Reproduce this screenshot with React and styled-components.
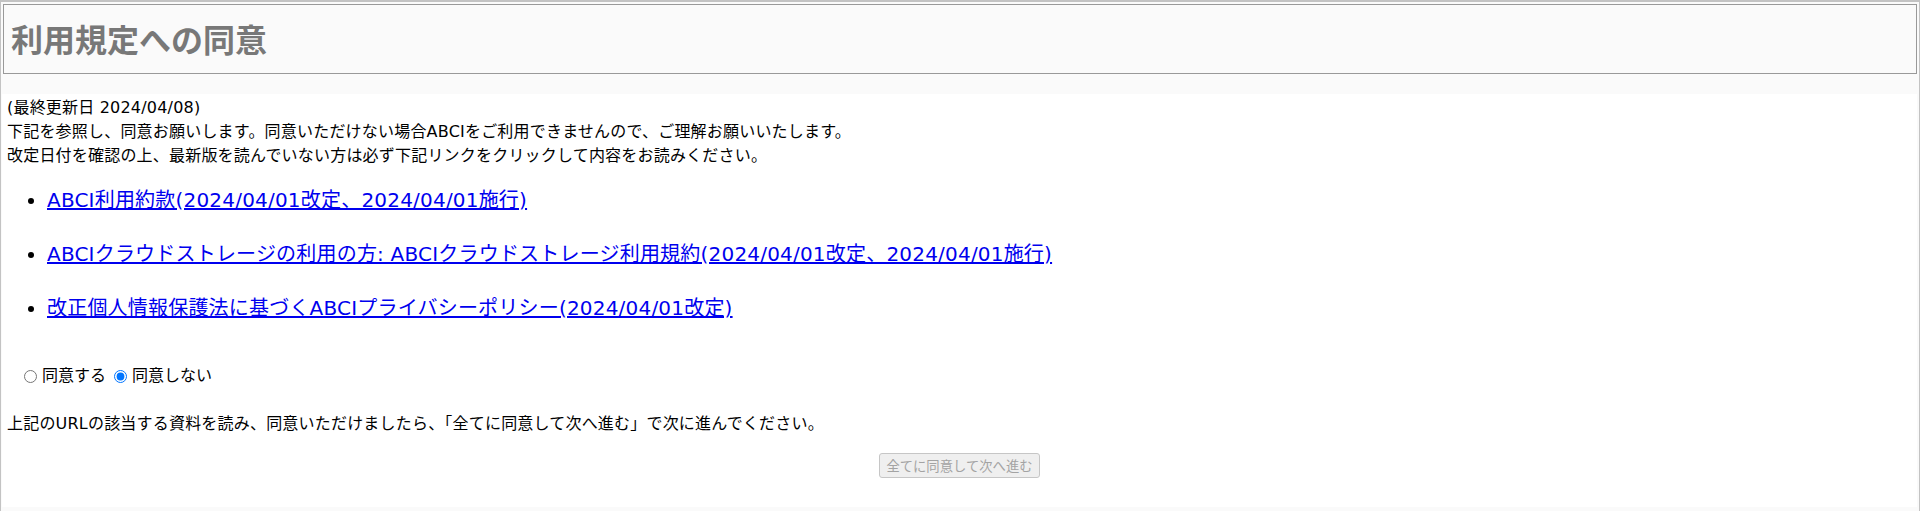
import React, { useState } from 'react'
import styled, { createGlobalStyle } from 'styled-components'

const GlobalStyle = createGlobalStyle`
    html, body {
        margin: 0;
        padding: 0;
        background: #fafafa;
    }
    body {
        font-family: "DejaVu Sans", "Noto Sans CJK JP", sans-serif;
        font-size: 16px;
        color: #000;
    }
    * {
        box-sizing: border-box;
    }
`

const links = [
    'ABCI利用約款(2024/04/01改定、2024/04/01施行)',
    'ABCIクラウドストレージの利用の方: ABCIクラウドストレージ利用規約(2024/04/01改定、2024/04/01施行)',
    '改正個人情報保護法に基づくABCIプライバシーポリシー(2024/04/01改定)',
]

function App() {
    const [agree, setAgree] = useState('no')

    return (
        <Frame>
            <GlobalStyle />
            <Header>
                <h1>利用規定への同意</h1>
            </Header>
            <Content>
                <Notice>
                    (最終更新日 2024/04/08)<br />
                    下記を参照し、同意お願いします。同意いただけない場合ABCIをご利用できませんので、ご理解お願いいたします。<br />
                    改定日付を確認の上、最新版を読んでいない方は必ず下記リンクをクリックして内容をお読みください。
                </Notice>
                <LinkList>
                    {links.map((text) => (
                        <li key={text}>
                            <a href="#">{text}</a>
                        </li>
                    ))}
                </LinkList>
                <RadioRow>
                    <label>
                        <input
                            type="radio"
                            name="agree"
                            checked={agree === 'yes'}
                            onChange={() => setAgree('yes')}
                        />
                        同意する
                    </label>
                    <label>
                        <input
                            type="radio"
                            name="agree"
                            checked={agree === 'no'}
                            onChange={() => setAgree('no')}
                        />
                        同意しない
                    </label>
                </RadioRow>
                <Notice>
                    上記のURLの該当する資料を読み、同意いただけましたら、「全てに同意して次へ進む」で次に進んでください。
                </Notice>
                <ButtonRow>
                    <NextButton disabled={agree !== 'yes'}>全てに同意して次へ進む</NextButton>
                </ButtonRow>
            </Content>
        </Frame>
    )
}

export default App

const Frame = styled.div`
    min-height: 511px;
    background: #fafafa;
    border-top: 2px solid #c3c3c3;
    border-left: 1px solid #c3c3c3;
    border-right: 1px solid #c3c3c3;
    padding: 2px;
`

const Header = styled.div`
    height: 70px;
    border: 1px solid #999999;
    background: #fafafa;
    padding: 0 7px;
    h1 {
        margin: 0;
        font-family: "Noto Sans CJK JP", sans-serif;
        font-size: 32px;
        line-height: 66px;
        font-weight: 700;
        color: #787878;
    }
`

const Content = styled.div`
    margin: 20px 0 0 -1px;
    background: #ffffff;
    padding: 2px 5px 29px 5px;
`

const Notice = styled.p`
    margin: 0;
    font-size: 16px;
    line-height: 24px;
    letter-spacing: 0.2px;
`

const LinkList = styled.ul`
    margin: 17px 0 0 0;
    padding-left: 40px;
    li {
        font-size: 20px;
        line-height: 30px;
        letter-spacing: 0.2px;
    }
    li + li {
        margin-top: 24px;
    }
    a {
        color: #0000ee;
        text-decoration: underline;
    }
`

const RadioRow = styled.div`
    display: flex;
    align-items: center;
    gap: 8px;
    margin: 41px 0 24px 0;
    padding-left: 17px;
    font-size: 16px;
    line-height: 24px;
    label {
        display: inline-flex;
        align-items: center;
    }
    input {
        width: 13px;
        height: 13px;
        margin: 0 5px 0 0;
        accent-color: #0075ff;
    }
`

const ButtonRow = styled.div`
    text-align: center;
    margin-top: 17px;
`

const NextButton = styled.button`
    font-family: "Noto Sans CJK JP", sans-serif;
    font-size: 13.33px;
    height: 25px;
    line-height: 21px;
    padding: 0 6px;
    background: #efefef;
    color: #a3a3a3;
    border: 1px solid #c6c6c6;
    border-radius: 3px;
    &:not(:disabled) {
        color: #000;
        border-color: #767676;
        cursor: pointer;
    }
`
